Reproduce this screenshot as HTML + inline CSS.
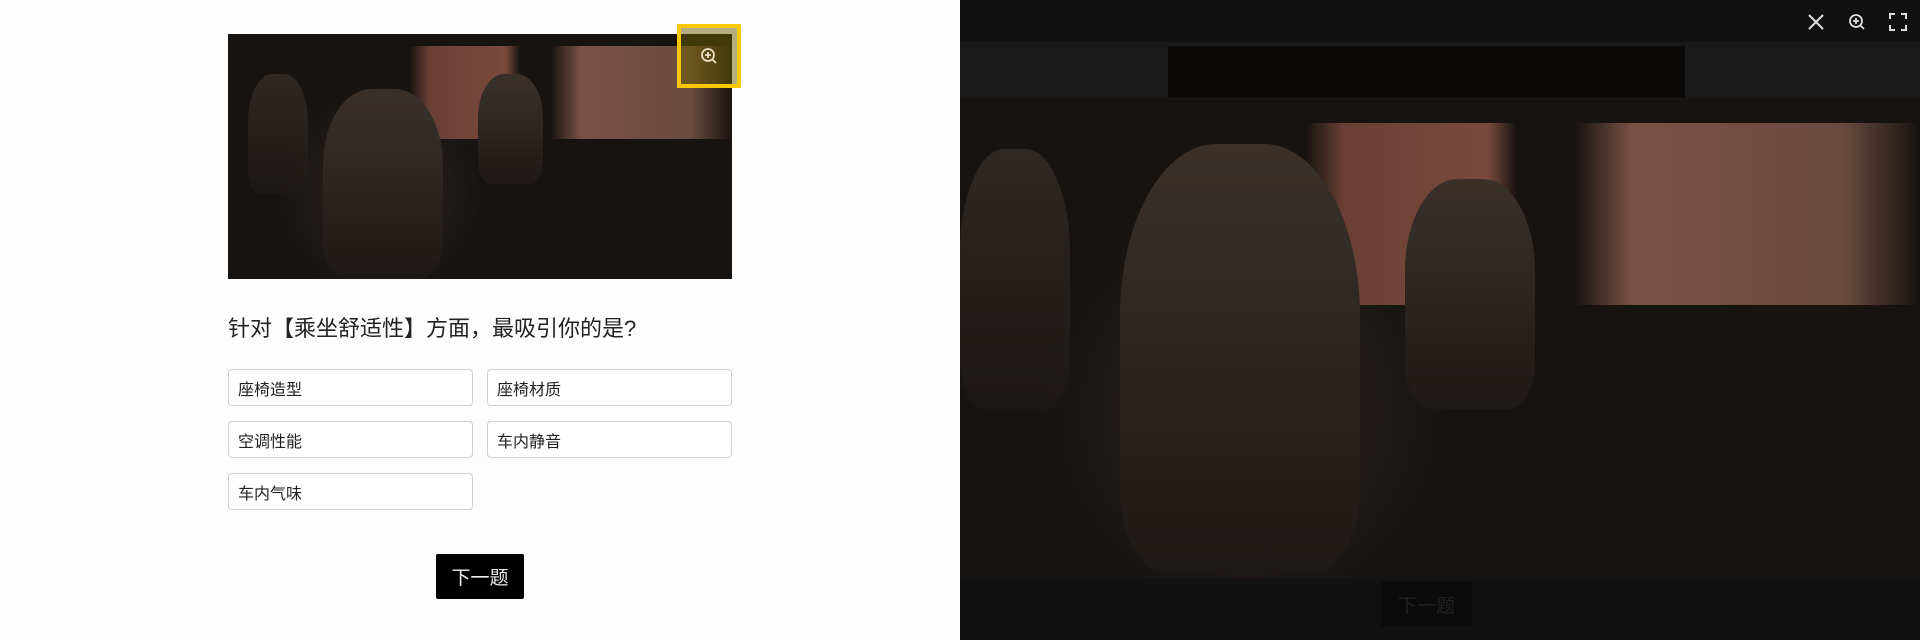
<!DOCTYPE html>
<html><head><meta charset="utf-8"><style>
*{margin:0;padding:0;box-sizing:border-box}
body{width:1920px;height:640px;overflow:hidden;background:#fdfdfd;font-family:"Liberation Sans","Noto Sans CJK SC",sans-serif;position:relative}
.img{position:absolute;overflow:hidden;background:
linear-gradient(90deg,transparent 36%,#6a4034 40%,#7a4a3c 55%,transparent 58%,transparent 64%,#7a5244 70%,#6a4a3e 92%,transparent 100%) 0 8%/100% 38% no-repeat,
radial-gradient(ellipse 22% 45% at 30% 65%,#2e2622 0,#161311 100%),
#141110}
.seat{position:absolute;border-radius:40% 40% 20% 20%;background:linear-gradient(180deg,#3a312b,#1e1916)}
.opt{position:absolute;width:245px;height:37px;border:1.5px solid #cfcfcf;border-radius:4px;background:#fff;font-size:16px;color:#222;padding-left:9px;display:flex;align-items:center}
</style></head><body>
<div class="img" style="left:228px;top:34px;width:504px;height:245px">
<div class="seat" style="left:95px;top:55px;width:120px;height:190px"></div>
<div class="seat" style="left:250px;top:40px;width:65px;height:110px"></div>
<div class="seat" style="left:20px;top:40px;width:60px;height:120px;opacity:.7"></div>
</div>
<div style="position:absolute;left:677px;top:24px;width:64px;height:64px;border:4px solid #f8c800;background:rgba(110,95,0,.5)"></div>
<svg style="position:absolute;left:700px;top:47px" width="18" height="18" viewBox="0 0 18 18" fill="none" stroke="#e8e0c0" stroke-width="1.8"><circle cx="8" cy="8" r="6"/><path d="M12.5 12.5L16 16M8 5v6M5 8h6"/></svg>
<div style="position:absolute;left:228px;top:311px;font-size:22px;color:#222">针对【乘坐舒适性】方面，最吸引你的是?</div>
<div class="opt" style="left:228px;top:369px">座椅造型</div>
<div class="opt" style="left:487px;top:369px">座椅材质</div>
<div class="opt" style="left:228px;top:421px">空调性能</div>
<div class="opt" style="left:487px;top:421px">车内静音</div>
<div class="opt" style="left:228px;top:473px">车内气味</div>
<div style="position:absolute;left:436px;top:554px;width:88px;height:45px;background:#000;color:#eee;font-size:19px;display:flex;align-items:center;justify-content:center;border-radius:2px">下一题</div>

<div style="position:absolute;left:960px;top:0;width:960px;height:640px;background:#111"></div>
<div style="position:absolute;left:960px;top:42px;width:960px;height:58px;background:#1a1a1a"></div>
<div style="position:absolute;left:1168px;top:46px;width:517px;height:52px;background:#0a0908"></div>
<div class="img" style="left:960px;top:99px;width:960px;height:480px">
<div class="seat" style="left:160px;top:45px;width:240px;height:430px"></div>
<div class="seat" style="left:445px;top:80px;width:130px;height:230px"></div>
<div class="seat" style="left:0px;top:50px;width:110px;height:260px;opacity:.7"></div>
</div>
<div style="position:absolute;left:1381px;top:582px;width:91px;height:44px;background:#0b0b0b;color:#222;font-size:19px;display:flex;align-items:center;justify-content:center">下一题</div>
<svg style="position:absolute;left:1806px;top:12px" width="20" height="20" viewBox="0 0 20 20" stroke="#ddd" stroke-width="2"><path d="M3 3L17 17M17 3L3 17"/></svg>
<svg style="position:absolute;left:1848px;top:13px" width="18" height="18" viewBox="0 0 18 18" fill="none" stroke="#ddd" stroke-width="1.8"><circle cx="8" cy="8" r="6"/><path d="M12.5 12.5L16 16M8 5v6M5 8h6"/></svg>
<svg style="position:absolute;left:1889px;top:13px" width="18" height="18" viewBox="0 0 18 18" fill="none" stroke="#ddd" stroke-width="2"><path d="M1 6V1h5M12 1h5v5M17 12v5h-5M6 17H1v-5"/></svg>
</body></html>
